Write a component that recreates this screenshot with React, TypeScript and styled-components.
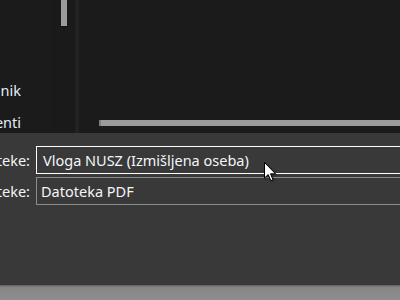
import React from 'react';
import styled, { createGlobalStyle } from 'styled-components';

const GlobalStyle = createGlobalStyle`
    html, body {
        margin: 0;
        padding: 0;
        background: #1b1b1b;
    }
    body {
        font-family: "Noto Sans", "Open Sans", sans-serif;
    }
`

const Window = styled.div`
    position: relative;
    width: 400px;
    height: 300px;
    overflow: hidden;
    display: flex;
    flex-direction: column;
    background: #1b1b1b;
`

const Browser = styled.div`
    height: 133px;
    display: flex;
    flex-shrink: 0;
`

const NavPane = styled.div`
    width: 52px;
    display: flex;
    flex-direction: column;
    padding-top: 79px;
    gap: 10px;
    background: #1b1b1b;
`

const NavItem = styled.div`
    height: 22px;
    display: flex;
    justify-content: flex-end;
    align-items: center;
    width: 21px;
    overflow: hidden;
    white-space: nowrap;
    color: #e4eef8;
    font-size: 14.5px;
`

const VTrack = styled.div`
    width: 23px;
    background: #1a1a1a;
    padding-left: 9px;
    box-sizing: border-box;
`

const VThumb = styled.div`
    width: 6px;
    height: 26px;
    background: #9b9b9b;
    box-shadow: 0 1px 0 #111;
`

const Splitter = styled.div`
    width: 4px;
    background: #242424;
    border-left: 1px solid #202020;
    border-right: 1px solid #202020;
    box-sizing: border-box;
`

const FileView = styled.div`
    flex: 1;
    display: flex;
    flex-direction: column;
    justify-content: flex-end;
    padding: 0 0 7px 20px;
`

const HThumb = styled.div`
    height: 6px;
    background: #9b9b9b;
    border-left: 2px solid #7e7e7e;
`

const Footer = styled.div`
    height: 152px;
    flex-shrink: 0;
    background: #393939;
    padding-top: 13px;
    box-sizing: border-box;
    display: flex;
    flex-direction: column;
    gap: 3px;
`

const FieldRow = styled.div`
    display: flex;
    align-items: center;
    gap: 6px;
`

const Label = styled.div`
    width: 30px;
    flex-shrink: 0;
    display: flex;
    justify-content: flex-end;
    overflow: hidden;
    white-space: nowrap;
    color: #f2f4f6;
    font-size: 14.5px;
`

const Field = styled.div<{ focused?: boolean }>`
    width: 420px;
    flex-shrink: 0;
    height: 28px;
    box-sizing: border-box;
    border: 1px solid ${props => props.focused ? '#ffffff' : '#8c8c8c'};
    padding-left: ${props => props.focused ? 6 : 4}px;
    display: flex;
    align-items: center;
    color: #f4f6f8;
    font-size: 14.5px;
    white-space: nowrap;
`

const StatusStrip = styled.div`
    flex: 1;
    background: linear-gradient(#5a5a5a 0, #858585 2px, #8e8e8e 100%);
`

const Cursor = styled.svg`
    position: absolute;
    left: 264px;
    top: 162px;
    filter: drop-shadow(1px 1px 1px rgba(0, 0, 0, 0.35));
`

export default function App() {
    return (
        <Window>
            <GlobalStyle />
            <Browser>
                <NavPane>
                    <NavItem>Ta računalnik</NavItem>
                    <NavItem>Dokumenti</NavItem>
                </NavPane>
                <VTrack><VThumb /></VTrack>
                <Splitter />
                <FileView><HThumb /></FileView>
            </Browser>
            <Footer>
                <FieldRow>
                    <Label>Ime datoteke:</Label>
                    <Field focused>Vloga NUSZ (Izmišljena oseba)</Field>
                </FieldRow>
                <FieldRow>
                    <Label>Vrsta datoteke:</Label>
                    <Field>Datoteka PDF</Field>
                </FieldRow>
            </Footer>
            <StatusStrip />
            <Cursor width="13" height="20" viewBox="0 0 13 20">
                <path d="M0.5 0.5 L0.5 16 L4.2 12.6 L6.8 18.6 L9 17.7 L6.5 11.8 L11.5 11.8 Z" fill="#ffffff" stroke="#000000" strokeWidth="1" strokeLinejoin="miter" />
            </Cursor>
        </Window>
    )
}
